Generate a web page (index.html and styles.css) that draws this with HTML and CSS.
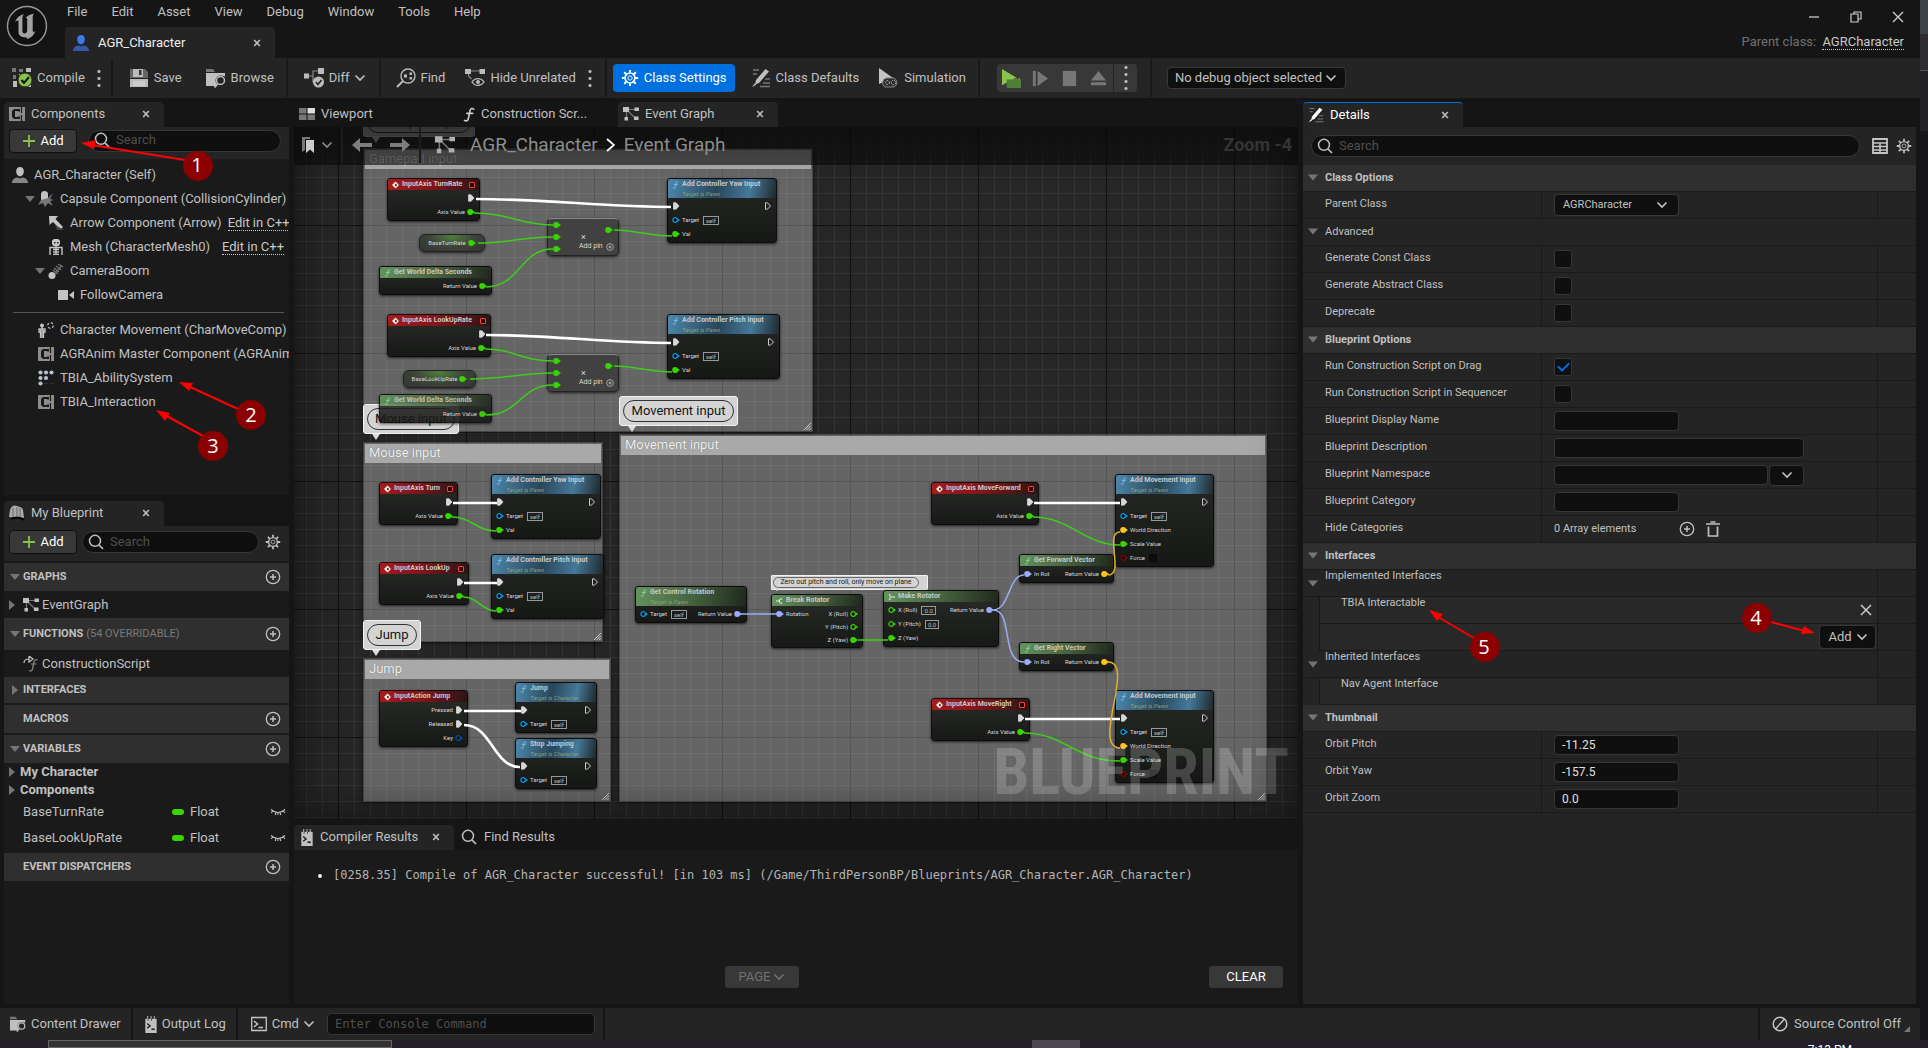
FILE: index.html
```html
<!DOCTYPE html>
<html lang="en">
<head>
<meta charset="utf-8">
<title>AGR_Character</title>
<link rel="stylesheet" href="styles.css">
</head>
<body>
<svg class="sprite" aria-hidden="true">
  <symbol id="i-exec" viewBox="0 0 8 8"><path d="M1.5 .8h2.6L7 4 4.100 7.200H1.500z" fill="currentColor" stroke="currentColor" stroke-width=".8" stroke-linejoin="round"/></symbol>
  <symbol id="i-exec-o" viewBox="0 0 8 8"><path d="M1.500.8h1.900L6.500 4 3.400 7.200H1.500z" fill="none" stroke="#ddd" stroke-width=".9" stroke-linejoin="round"/></symbol>
  <symbol id="i-pin" viewBox="0 0 8 8"><circle cx="3.200" cy="4" r="3" fill="currentColor"/><path d="M5.500 2.200 8 4 5.500 5.800z" fill="currentColor"/></symbol>
  <symbol id="i-pin-o" viewBox="0 0 8 8"><circle cx="3.200" cy="4" r="2.300" fill="#0b0b0b" stroke="currentColor" stroke-width="1.300"/><path d="M6 2.400 8 4 6 5.600z" fill="currentColor"/></symbol>
  <symbol id="i-event" viewBox="0 0 8 8"><path d="M4 0 8 4 4 8 0 4z" fill="#eee"/><path d="M3.500 2.500h1L6 4 4.500 5.500h-1z" fill="#7a1010"/></symbol>
  <symbol id="i-f" viewBox="0 0 8 10"><path d="M7.200 1.500C6.200.6 5 .9 4.700 2.400L3.500 8C3.200 9.300 2 9.600 1 8.900M2.500 4.200h4" fill="none" stroke="currentColor" stroke-width="1.100" stroke-linecap="round"/></symbol>
  <symbol id="i-chev" viewBox="0 0 10 8"><path d="M1 2l4 4 4-4" fill="none" stroke="currentColor" stroke-width="1.700" stroke-linecap="round"/></symbol>
  <symbol id="i-down" viewBox="0 0 10 6"><path d="M0 0h10L5 6z" fill="#757575"/></symbol>
  <symbol id="i-right" viewBox="0 0 6 10"><path d="M0 0v10l6-5z" fill="#757575"/></symbol>
  <symbol id="i-x" viewBox="0 0 8 8"><path d="M1.200 1l5.600 6M6.800 1 1.200 7" stroke="currentColor" stroke-width="1.700"/></symbol>
  <symbol id="i-plus" viewBox="0 0 14 14"><path d="M7 1v12M1 7h12" stroke="#8bc34a" stroke-width="1.800"/></symbol>
  <symbol id="i-addc" viewBox="0 0 16 16"><circle cx="8" cy="8" r="6.700" fill="none" stroke="currentColor" stroke-width="1.300"/><path d="M8 5v6M5 8h6" stroke="currentColor" stroke-width="1.500"/></symbol>
  <symbol id="i-search" viewBox="0 0 16 16"><circle cx="7" cy="6.800" r="5.500" fill="none" stroke="currentColor" stroke-width="1.500"/><path d="M11 11l4 4" stroke="currentColor" stroke-width="1.700"/></symbol>
  <symbol id="i-gear" viewBox="0 0 20 20"><circle cx="10" cy="10" r="5.500" fill="none" stroke="currentColor" stroke-width="1.800"/><circle cx="10" cy="10" r="2.400" fill="none" stroke="currentColor" stroke-width="1"/><g stroke="currentColor" stroke-width="2.200"><path d="M10 1v3M10 16v3M1 10h3M16 10h3M3.600 3.600l2.200 2.200M14.200 14.200l2.200 2.200M16.400 3.600l-2.200 2.200M5.800 14.200l-2.200 2.200"/></g></symbol>
  <symbol id="i-comp" viewBox="0 0 16 16"><path d="M0 1h16v14H0z" fill="#8d8d8d"/><path d="M11 5.500V3H5L3 5v6l2 2h6v-2.500H9v.5H6V5h3v.5z" fill="#1a1a1a"/><path d="M12.500 1v6M12.500 15V9" stroke="#1a1a1a" stroke-width="1.200"/></symbol>
  <symbol id="i-graph" viewBox="0 0 16 16"><path d="M5 3.500h7M4 4l8 8M3.500 5v8" stroke="#777" stroke-width="1.200"/><path d="M0 1h6v5H0zM11.500 1.500H16v3.500h-4.500zM11 10.500h4.500V14H11zM1.500 11h3.500v3.500H1.500z" fill="currentColor"/></symbol>
  <symbol id="i-user" viewBox="0 0 16 16"><path d="M8 0c2.500 0 3.800 1.700 3.800 4.300 0 2.700-1.600 5-3.800 5S4.200 7 4.200 4.300C4.200 1.700 5.500 0 8 0z" fill="currentColor"/><path d="M0 16c0-3.500 2.500-5 5.500-5.500L8 11.500l2.500-1C13.500 11 16 12.500 16 16z" fill="currentColor" opacity=".65"/></symbol>
  <symbol id="i-pen" viewBox="0 0 20 20"><path d="M2 2h6M2 6h4M12 15h7M9 18.500h10M14 11h5" stroke="#777" stroke-width="1.300"/><path d="M14.500 1 18 3.500 8 15l-4 1.500L5 12z" fill="currentColor"/><path d="M4 15l-3 4 4-2z" fill="currentColor"/></symbol>
  <symbol id="i-folder" viewBox="0 0 20 20"><path d="M0 1h7l2 3H0z" fill="#777"/><path d="M0 5h19v3.500a6 6 0 0 0-8 8L10 18H0z" fill="currentColor"/><circle cx="14.500" cy="12.500" r="5" fill="#242424"/><circle cx="14.500" cy="12.500" r="4" fill="none" stroke="currentColor" stroke-width="1.500"/><path d="M11.700 15.500 8.500 19.500" stroke="currentColor" stroke-width="1.800"/></symbol>
  <symbol id="i-log" viewBox="0 0 12 18"><path d="M0 3h12v15H0z" fill="currentColor"/><path d="M2.500 0v5M6 0v5M9.500 0v5" stroke="currentColor" stroke-width="1"/><path d="M3 3v2M6.500 3v2" stroke="#222" stroke-width=".8"/><path d="M2 8l3 2.500L2 13M6.500 14H10" fill="none" stroke="#1a1a1a" stroke-width="1.400"/></symbol>
  <symbol id="i-eye" viewBox="0 0 16 8"><path d="M1 1.500c4 4 10 4 14 0M2.800 3 1 5M6 4.500l-.8 2.500M10 4.500l.8 2.500M13.200 3 15 5M8 5v2" fill="none" stroke="currentColor" stroke-width="1.100"/></symbol>
  <symbol id="i-grip" viewBox="0 0 8 8"><path d="M0 8 8 0M3 8l5-5M6 8l2-2" stroke="#ddd" stroke-width="1"/></symbol>
</svg>

<div class="app">
  <header class="titlebar">
    <svg class="logo" viewBox="0 0 42 42"><circle cx="21" cy="21" r="19.500" fill="#101010" stroke="#9a9a9a" stroke-width="1.400"/><path d="M9 17c2-5 5.500-7 9-8-1.500 1.800-1.600 3-1.600 5v12c0 2 1.300 3 2.800 2.300 1.400-.6 2-1.300 2-3V14.500c0-1.200-.5-1.800-1.700-1.800 2.500-2.400 5-3.200 8.500-4.200-1 1.300-1.300 2.500-1.300 4.500v12.500c0 1.500 1 2 2.600.5-1.500 4.500-4 6.500-8 8-.3-1.300-.8-1.800-2-1.800-2.800 0-6.800-1-6.800-5V16.500c0-1.500-1.500-1.500-3.500.5z" fill="#a2a2a2"/></svg>
    <div class="title-main">
      <nav class="menu"><button>File</button><button>Edit</button><button>Asset</button><button>View</button><button>Debug</button><button>Window</button><button>Tools</button><button>Help</button></nav>
      <div class="doc-tab"><svg class="ic16 blue"><use href="#i-user"/></svg><span>AGR_Character</span><button class="close" aria-label="Close"><svg><use href="#i-x"/></svg></button></div>
    </div>
    <div class="title-right">
      <div class="win"><button aria-label="Minimize"><svg viewBox="0 0 12 12"><path d="M1 6h10" stroke="#ccc" stroke-width="1.300"/></svg></button><button aria-label="Restore"><svg viewBox="0 0 12 12"><path d="M1 3h7v8H1zM4 3V1h7v7H8" fill="none" stroke="#ccc" stroke-width="1.200"/></svg></button><button aria-label="Close window"><svg viewBox="0 0 12 12"><path d="M1 1l10 10M11 1 1 11" stroke="#ccc" stroke-width="1.400"/></svg></button></div>
      <div class="parent">Parent class: <a href="#">AGRCharacter</a></div>
    </div>
  </header>

  <div class="toolbar">
    <div class="group first">
      <button class="tool"><svg viewBox="0 0 20 20"><path d="M0 0h4v4H0zM7 1h4v3H7zM1 7h3v4H1z" fill="#777"/><path d="M14 0h5v4h-5zM7 6h4v3H7zM1 13h4v6H1zM16 15h3v4h-3z" fill="#bbb"/><circle cx="13" cy="12" r="7" fill="#8bc34a" stroke="#242424"/><path d="M9.500 12l2.500 3 5-6" fill="none" stroke="#111" stroke-width="2"/></svg>Compile</button><button class="dots" aria-label="Compile options"></button>
    </div>
    <div class="group g-file">
      <button class="tool save"><svg viewBox="0 0 20 20"><path d="M1 1h15l3 3v6H1z" fill="#666"/><path d="M4 1h10v8H4zM1 11h18v8H1z" fill="#bbb"/><path d="M10 2h2.500v5H10z" fill="#333"/><path d="M4 13v5h12v-5z" fill="#ccc"/></svg>Save</button>
      <button class="tool"><svg><use href="#i-folder"/></svg>Browse</button>
    </div>
    <div class="group g-diff">
      <button class="tool"><svg viewBox="0 0 20 20"><path d="M5 8h4V3h5M9 8v6h3" fill="none" stroke="#888" stroke-width="1.200"/><path d="M0 5.500h5v5H0zM14 0h6v6h-6z" fill="#bbb"/><circle cx="14.500" cy="14" r="5.500" fill="#bbb"/><path d="M12 14l2 2.500 3.500-4.500" fill="none" stroke="#222" stroke-width="1.600"/></svg>Diff<svg class="chev"><use href="#i-chev"/></svg></button>
    </div>
    <div class="group g-find">
      <button class="tool"><svg viewBox="0 0 20 20"><circle cx="12" cy="8" r="7" fill="none" stroke="#bbb" stroke-width="1.400"/><path d="M7 13l-6 6" stroke="#bbb" stroke-width="2"/><path d="M8 6.500h3v3H8zM13.500 4.500H16V7h-2.500zM13.500 9H16v2.500h-2.500zM11 8h1.500" fill="#bbb"/></svg>Find</button>
      <button class="tool"><svg viewBox="0 0 20 20"><path d="M5 3h11M3.500 4v4l3 3" fill="none" stroke="#888" stroke-width="1.200"/><path d="M0 1h6v5H0zM14.500 1H20v5h-5.500z" fill="#bbb"/><path d="M7 14c3-4.500 9-4.500 12 0-3 4.500-9 4.500-12 0z" fill="none" stroke="#bbb" stroke-width="1.300"/><circle cx="13" cy="14" r="2" fill="#bbb"/></svg>Hide Unrelated</button><button class="dots" aria-label="Hide options"></button>
    </div>
    <div class="group g-class">
      <button class="tool active"><svg><use href="#i-gear"/></svg>Class Settings</button>
      <button class="tool"><svg><use href="#i-pen"/></svg>Class Defaults</button>
      <button class="tool"><svg viewBox="0 0 20 20"><path d="M0 0l14 10L0 16z" fill="#c4c4c4"/><path d="M6 19a5 5 0 0 1 1-9h8a5 5 0 0 1 0 9z" fill="#2c2c2c" stroke="#888"/><circle cx="8.500" cy="14.500" r="2" fill="none" stroke="#bbb" stroke-dasharray="1.500 1"/><circle cx="14.500" cy="14.500" r="2.200" fill="none" stroke="#bbb" stroke-dasharray="1.500 1"/></svg>Simulation</button>
    </div>
    <div class="group">
      <div class="play">
        <button aria-label="Play"><svg viewBox="0 0 20 20"><path d="M0 0l15 9L0 17z" fill="#8bc34a"/><path d="M5 11h15v9H5z" fill="#4f7d38"/><path d="M11 10.500h9" stroke="#8bc34a" stroke-dasharray="2 1"/></svg></button>
        <button aria-label="Step"><svg viewBox="0 0 20 20"><path d="M3.500 2v16" stroke="#777" stroke-width="3"/><path d="M7 2l11 8-11 8z" fill="#777"/></svg></button>
        <button aria-label="Stop"><svg viewBox="0 0 20 20"><path d="M3 2h14v16H3z" fill="#777"/></svg></button>
        <button aria-label="Eject"><svg viewBox="0 0 20 20"><path d="M10 2l8 10H2zM2 14h16v3H2z" fill="#777"/></svg></button>
        <button class="dots" aria-label="Play options"></button>
      </div>
    </div>
    <div class="group last">
      <div class="select"><select class="debug" aria-label="Debug object"><option>No debug object selected</option></select><svg><use href="#i-chev"/></svg></div>
    </div>
  </div>

  <main class="work">
    <aside class="left">
      <div class="tabs"><div class="tab on"><svg class="ic16"><use href="#i-comp"/></svg><span>Components</span><button class="close" aria-label="Close"><svg><use href="#i-x"/></svg></button></div></div>
      <div class="find-row comps"><button class="add"><svg><use href="#i-plus"/></svg>Add</button><label class="search"><svg><use href="#i-search"/></svg><input placeholder="Search" aria-label="Search components"></label></div>
      <div class="tree">
        <ul>
          <li class="d0"><svg class="ic16"><use href="#i-user"/></svg><span>AGR_Character (Self)</span></li>
          <li class="d1"><svg class="tri"><use href="#i-down"/></svg><svg class="ic16" viewBox="0 0 16 16"><path d="M3 3c0-4 7-4 7 0v5c0 3-1 4-3.500 4S3 11 3 8z" fill="#c4c4c4"/><path d="M10 7l5-5-3 6 4 1-4 1 3 5-5-3-3 4-2-4-5 2 3-5z" fill="#777"/></svg><span>Capsule Component (CollisionCylinder)</span></li>
          <li class="d2"><svg class="ic16" viewBox="0 0 16 16"><path d="M1 1h9L7.500 4l7.500 8-2.500 2.500L5 7 1.500 10z" fill="#c4c4c4"/><path d="M7 10l9 5H9z" fill="#444"/></svg><span>Arrow Component (Arrow)</span><a href="#">Edit in C++</a></li>
          <li class="d2"><svg class="ic16" viewBox="0 0 16 16"><path d="M4 2c1-3 7-3 8 0v3l-1.500 2h-5L4 5z" fill="#c4c4c4"/><path d="M6 3h1.500v1.500H6zM9 3h1.500v1.500H9z" fill="#222"/><path d="M2 16V8.500h12V16M8 7v9M5 10.500h6M5 13h6M5 15.500h6" fill="none" stroke="#c4c4c4" stroke-width="1.400"/></svg><span class="mesh">Mesh (CharacterMesh0)</span><a href="#">Edit in C++</a></li>
          <li class="d1b"><svg class="tri"><use href="#i-down"/></svg><svg class="ic16" viewBox="0 0 16 16"><circle cx="4" cy="12.500" r="3.500" fill="#c4c4c4"/><path d="M5 7l5 4M6 5l5 4M8 3l5 4M10 1l5 3M7 11l7-9" stroke="#777" stroke-width="1.200"/></svg><span>CameraBoom</span></li>
          <li class="d3"><svg class="ic16" viewBox="0 0 16 16"><path d="M0 3h10v10H0zM11 8l5-4v8z" fill="#c4c4c4"/></svg><span>FollowCamera</span></li>
        </ul>
        <hr>
        <ul>
          <li class="d4"><svg class="ic16" viewBox="0 0 16 16"><circle cx="4" cy="3.500" r="2" fill="#c4c4c4"/><path d="M4 5v11M1 11l0-4h6v4M5.500 8v8M2.500 8v8" stroke="#c4c4c4" stroke-width="1.300" fill="none"/><circle cx="12.500" cy="3.500" r="2.800" fill="none" stroke="#c4c4c4" stroke-width="1.200" stroke-dasharray="2.400 2"/></svg><span>Character Movement (CharMoveComp)</span></li>
          <li class="d4"><svg class="ic16"><use href="#i-comp"/></svg><span>AGRAnim Master Component (AGRAnim</span></li>
          <li class="d4"><svg class="ic16" viewBox="0 0 16 16"><g fill="#b8c0cc"><circle cx="2.500" cy="2.500" r="2.100"/><circle cx="8" cy="2.500" r="2.100"/><circle cx="13.500" cy="2.500" r="2.100"/><circle cx="2.500" cy="8" r="2.100"/><circle cx="8" cy="8" r="2.100"/><circle cx="2.500" cy="13.500" r="2.100"/></g><path d="M6 13.500h4M12 13.500h4" stroke="#333"/></svg><span>TBIA_AbilitySystem</span></li>
          <li class="d4"><svg class="ic16"><use href="#i-comp"/></svg><span>TBIA_Interaction</span></li>
        </ul>
      </div>
      <div class="tabs second"><div class="tab on"><svg class="ic16" viewBox="0 0 16 16"><path d="M1 5c2-5 4-5 7-4s5 1 6 4l1 8-5-1-4 1-6-1z" fill="#aaa"/><path d="M4 3v9M8 2v9M11 3v9" stroke="#666"/><path d="M2 14c4-2 9-2 13 1" stroke="#000" stroke-width="2" fill="none"/></svg><span>My Blueprint</span><button class="close" aria-label="Close"><svg><use href="#i-x"/></svg></button></div></div>
      <div class="find-row bp"><button class="add"><svg><use href="#i-plus"/></svg>Add</button><label class="search"><svg><use href="#i-search"/></svg><input placeholder="Search" aria-label="Search blueprint"></label><button class="icon" aria-label="Settings"><svg><use href="#i-gear"/></svg></button></div>
      <div class="blueprint">
        <div class="sec"><svg class="tri"><use href="#i-down"/></svg><b>GRAPHS</b><button class="icon" aria-label="Add graph"><svg><use href="#i-addc"/></svg></button></div>
        <div class="item"><svg class="tri-r"><use href="#i-right"/></svg><svg class="ic16"><use href="#i-graph"/></svg><span>EventGraph</span></div>
        <div class="sec tall"><svg class="tri"><use href="#i-down"/></svg><b>FUNCTIONS</b><span class="dim">(54 OVERRIDABLE)</span><button class="icon" aria-label="Add function"><svg><use href="#i-addc"/></svg></button></div>
        <div class="item noarrow"><svg class="ic16" viewBox="0 0 16 16"><path d="M1 7c0-3 2-4 5-4M6 0l4 3-4 3z" stroke="#c4c4c4" fill="none" stroke-width="1.200"/><path d="M14.500 4c-2-1-3 0-3.500 2L9.500 13c-.5 2-2 2.500-3.500 1.500M8 8h5.500" fill="none" stroke="#888" stroke-width="1.200"/></svg><span>ConstructionScript</span></div>
        <div class="sec short gap"><svg class="tri-r"><use href="#i-right"/></svg><b>INTERFACES</b></div>
        <div class="sec gap"><i class="tri"></i><b>MACROS</b><button class="icon" aria-label="Add macro"><svg><use href="#i-addc"/></svg></button></div>
        <div class="sec"><svg class="tri"><use href="#i-down"/></svg><b>VARIABLES</b><button class="icon" aria-label="Add variable"><svg><use href="#i-addc"/></svg></button></div>
        <div class="cat"><svg class="tri-r"><use href="#i-right"/></svg><b>My Character</b></div>
        <div class="cat"><svg class="tri-r"><use href="#i-right"/></svg><b>Components</b></div>
        <div class="var"><span>BaseTurnRate</span><i></i><span>Float</span><svg><use href="#i-eye"/></svg></div>
        <div class="var gap"><span>BaseLookUpRate</span><i></i><span>Float</span><svg><use href="#i-eye"/></svg></div>
        <div class="sec"><i class="tri"></i><b>EVENT DISPATCHERS</b><button class="icon" aria-label="Add dispatcher"><svg><use href="#i-addc"/></svg></button></div>
      </div>
      <svg class="callouts" viewBox="4 98 289 380">
        <g stroke="#f00" stroke-width="2" fill="#f00"><path d="M185 160 92 145"/><path d="M81 143l15-3-2 9z" stroke="none"/><path d="M238 409l-50-23"/><path d="M179 382l14 1-4 8z" stroke="none"/><path d="M203 436l-38-21"/><path d="M156 410l14 3-5 8z" stroke="none"/></g>
        <g fill="#8b0000"><circle cx="198" cy="166" r="15"/><circle cx="251" cy="415" r="15"/><circle cx="213" cy="446" r="15"/></g>
        <g class="num"><text x="197" y="172">1</text><text x="251" y="422">2</text><text x="213" y="453">3</text></g>
      </svg>
    </aside>

    <section class="center">
      <div class="tabs graph-tabs">
        <div class="tab wide"><svg class="ic16" viewBox="0 0 16 16"><path d="M0 2h7.500v5.500H0zM0 8.500h7.500V14H0zM8.500 8.500H16V14H8.500z" fill="#777"/><path d="M8.500 2H16v5.500H8.500z" fill="#ddd"/></svg><span>Viewport</span></div>
        <div class="tab wide2"><svg class="f"><use href="#i-f"/></svg><span>Construction Scr...</span></div>
        <div class="tab on"><svg class="ic16"><use href="#i-graph"/></svg><span>Event Graph</span><button class="close" aria-label="Close"><svg><use href="#i-x"/></svg></button></div>
      </div>
      <div class="graph">
        <div class="bubble b-pad"><span>Gamepad input</span></div>
        <div class="comment c-pad"><h3>Gamepad input</h3><svg><use href="#i-grip"/></svg></div>
        <div class="comment c-mouse"><h3>Mouse input</h3><svg><use href="#i-grip"/></svg></div>
        <div class="comment c-jump"><h3>Jump</h3><svg><use href="#i-grip"/></svg></div>
        <div class="comment c-move"><h3>Movement input</h3><svg><use href="#i-grip"/></svg></div>
        <div class="bubble b-mouse"><span>Mouse input</span></div>
        <div class="bubble b-move"><span>Movement input</span></div>
        <div class="bubble b-jump"><span>Jump</span></div>
        <div class="bubble b-zero"><span>Zero out pitch and roll, only move on plane</span></div>

        <div class="node ev n1"><h4><svg><use href="#i-event"/></svg>InputAxis TurnRate<i></i></h4><div class="pins"><ul class="out"><li><svg><use href="#i-exec"/></svg></li><li class="g">Axis Value<svg><use href="#i-pin"/></svg></li></ul></div></div>
        <div class="node ev n6"><h4><svg><use href="#i-event"/></svg>InputAxis LookUpRate<i></i></h4><div class="pins"><ul class="out"><li><svg><use href="#i-exec"/></svg></li><li class="g">Axis Value<svg><use href="#i-pin"/></svg></li></ul></div></div>
        <div class="node ev n11"><h4><svg><use href="#i-event"/></svg>InputAxis Turn<i></i></h4><div class="pins"><ul class="out"><li><svg><use href="#i-exec"/></svg></li><li class="g">Axis Value<svg><use href="#i-pin"/></svg></li></ul></div></div>
        <div class="node ev n13"><h4><svg><use href="#i-event"/></svg>InputAxis LookUp<i></i></h4><div class="pins"><ul class="out"><li><svg><use href="#i-exec"/></svg></li><li class="g">Axis Value<svg><use href="#i-pin"/></svg></li></ul></div></div>
        <div class="node ev n21"><h4><svg><use href="#i-event"/></svg>InputAxis MoveForward<i></i></h4><div class="pins"><ul class="out"><li><svg><use href="#i-exec"/></svg></li><li class="g">Axis Value<svg><use href="#i-pin"/></svg></li></ul></div></div>
        <div class="node ev n25"><h4><svg><use href="#i-event"/></svg>InputAxis MoveRight<i></i></h4><div class="pins"><ul class="out"><li><svg><use href="#i-exec"/></svg></li><li class="g">Axis Value<svg><use href="#i-pin"/></svg></li></ul></div></div>
        <div class="node ev n15"><h4><svg><use href="#i-event"/></svg>InputAction Jump</h4><div class="pins"><ul class="out"><li>Pressed<svg><use href="#i-exec"/></svg></li><li>Released<svg><use href="#i-exec"/></svg></li><li class="k">Key<svg><use href="#i-pin-o"/></svg></li></ul></div></div>

        <div class="node fn n2"><h4><svg><use href="#i-f"/></svg>Add Controller Yaw Input</h4><p>Target is Pawn</p><div class="pins"><ul><li><svg><use href="#i-exec"/></svg></li><li class="t"><svg><use href="#i-pin-o"/></svg>Target<em>self</em></li><li class="g"><svg><use href="#i-pin"/></svg>Val</li></ul><ul class="out"><li><svg><use href="#i-exec-o"/></svg></li></ul></div></div>
        <div class="node fn n7"><h4><svg><use href="#i-f"/></svg>Add Controller Pitch Input</h4><p>Target is Pawn</p><div class="pins"><ul><li><svg><use href="#i-exec"/></svg></li><li class="t"><svg><use href="#i-pin-o"/></svg>Target<em>self</em></li><li class="g"><svg><use href="#i-pin"/></svg>Val</li></ul><ul class="out"><li><svg><use href="#i-exec-o"/></svg></li></ul></div></div>
        <div class="node fn n12"><h4><svg><use href="#i-f"/></svg>Add Controller Yaw Input</h4><p>Target is Pawn</p><div class="pins"><ul><li><svg><use href="#i-exec"/></svg></li><li class="t"><svg><use href="#i-pin-o"/></svg>Target<em>self</em></li><li class="g"><svg><use href="#i-pin"/></svg>Val</li></ul><ul class="out"><li><svg><use href="#i-exec-o"/></svg></li></ul></div></div>
        <div class="node fn n14"><h4><svg><use href="#i-f"/></svg>Add Controller Pitch Input</h4><p>Target is Pawn</p><div class="pins"><ul><li><svg><use href="#i-exec"/></svg></li><li class="t"><svg><use href="#i-pin-o"/></svg>Target<em>self</em></li><li class="g"><svg><use href="#i-pin"/></svg>Val</li></ul><ul class="out"><li><svg><use href="#i-exec-o"/></svg></li></ul></div></div>
        <div class="node fn n16"><h4><svg><use href="#i-f"/></svg>Jump</h4><p>Target is Character</p><div class="pins"><ul><li><svg><use href="#i-exec"/></svg></li><li class="t"><svg><use href="#i-pin-o"/></svg>Target<em>self</em></li></ul><ul class="out"><li><svg><use href="#i-exec-o"/></svg></li></ul></div></div>
        <div class="node fn n17"><h4><svg><use href="#i-f"/></svg>Stop Jumping</h4><p>Target is Character</p><div class="pins"><ul><li><svg><use href="#i-exec"/></svg></li><li class="t"><svg><use href="#i-pin-o"/></svg>Target<em>self</em></li></ul><ul class="out"><li><svg><use href="#i-exec-o"/></svg></li></ul></div></div>
        <div class="node fn n22"><h4><svg><use href="#i-f"/></svg>Add Movement Input</h4><p>Target is Pawn</p><div class="pins"><ul><li><svg><use href="#i-exec"/></svg></li><li class="t"><svg><use href="#i-pin-o"/></svg>Target<em>self</em></li><li class="y"><svg><use href="#i-pin"/></svg>World Direction</li><li class="g"><svg><use href="#i-pin"/></svg>Scale Value</li><li class="r"><svg><use href="#i-pin-o"/></svg>Force<s></s></li></ul><ul class="out"><li><svg><use href="#i-exec-o"/></svg></li></ul></div></div>
        <div class="node fn n26"><h4><svg><use href="#i-f"/></svg>Add Movement Input</h4><p>Target is Pawn</p><div class="pins"><ul><li><svg><use href="#i-exec"/></svg></li><li class="t"><svg><use href="#i-pin-o"/></svg>Target<em>self</em></li><li class="y"><svg><use href="#i-pin"/></svg>World Direction</li><li class="g"><svg><use href="#i-pin"/></svg>Scale Value</li><li class="r"><svg><use href="#i-pin-o"/></svg>Force<s></s></li></ul><ul class="out"><li><svg><use href="#i-exec-o"/></svg></li></ul></div></div>

        <div class="node mul n3"><ul><li class="g"><svg><use href="#i-pin"/></svg></li><li class="g"><svg><use href="#i-pin"/></svg></li><li class="g"><svg><use href="#i-pin"/></svg></li></ul><div class="mid"><b>×</b><span>Add pin <svg><use href="#i-addc"/></svg></span></div><svg class="res"><use href="#i-pin"/></svg></div>
        <div class="node mul n8"><ul><li class="g"><svg><use href="#i-pin"/></svg></li><li class="g"><svg><use href="#i-pin"/></svg></li><li class="g"><svg><use href="#i-pin"/></svg></li></ul><div class="mid"><b>×</b><span>Add pin <svg><use href="#i-addc"/></svg></span></div><svg class="res"><use href="#i-pin"/></svg></div>
        <div class="node get n4">BaseTurnRate<svg><use href="#i-pin"/></svg></div>
        <div class="node get n9">BaseLookUpRate<svg><use href="#i-pin"/></svg></div>

        <div class="node pure n5"><h4><svg><use href="#i-f"/></svg>Get World Delta Seconds</h4><div class="pins"><ul class="out"><li class="g">Return Value<svg><use href="#i-pin"/></svg></li></ul></div></div>
        <div class="node pure n10"><h4><svg><use href="#i-f"/></svg>Get World Delta Seconds</h4><div class="pins"><ul class="out"><li class="g">Return Value<svg><use href="#i-pin"/></svg></li></ul></div></div>
        <div class="node pure big n18"><h4><svg><use href="#i-f"/></svg>Get Control Rotation</h4><p>Target is Pawn</p><div class="pins"><ul><li class="t"><svg><use href="#i-pin-o"/></svg>Target<em>self</em></li></ul><ul class="out"><li class="v">Return Value<svg><use href="#i-pin"/></svg></li></ul></div></div>
        <div class="node pure n19"><h4><svg viewBox="0 0 8 8"><path d="M0 4h4M5 1.500h2M5 6.500h2M4 2v4" stroke="#eee" stroke-width="1.400" fill="none"/></svg>Break Rotator</h4><div class="pins"><ul><li class="v"><svg><use href="#i-pin"/></svg>Rotation</li></ul><ul class="out"><li class="g">X (Roll)<svg><use href="#i-pin-o"/></svg></li><li class="g">Y (Pitch)<svg><use href="#i-pin-o"/></svg></li><li class="g">Z (Yaw)<svg><use href="#i-pin"/></svg></li></ul></div></div>
        <div class="node pure n20"><h4><svg viewBox="0 0 8 8"><path d="M8 4H4M1 1.500h2M1 6.500h2M1.500 4H5" stroke="#eee" stroke-width="1.400" fill="none"/></svg>Make Rotator</h4><div class="pins"><ul><li class="g"><svg><use href="#i-pin-o"/></svg>X (Roll)<em>0.0</em></li><li class="g"><svg><use href="#i-pin-o"/></svg>Y (Pitch)<em>0.0</em></li><li class="g"><svg><use href="#i-pin"/></svg>Z (Yaw)</li></ul><ul class="out"><li class="v">Return Value<svg><use href="#i-pin"/></svg></li></ul></div></div>
        <div class="node pure n23"><h4><svg><use href="#i-f"/></svg>Get Forward Vector</h4><div class="pins"><ul><li class="v"><svg><use href="#i-pin"/></svg>In Rot</li></ul><ul class="out"><li class="y">Return Value<svg><use href="#i-pin"/></svg></li></ul></div></div>
        <div class="node pure n24"><h4><svg><use href="#i-f"/></svg>Get Right Vector</h4><div class="pins"><ul><li class="v"><svg><use href="#i-pin"/></svg>In Rot</li></ul><ul class="out"><li class="y">Return Value<svg><use href="#i-pin"/></svg></li></ul></div></div>

        <svg class="wires" viewBox="294 127 1004 692">
          <g stroke="#fff" stroke-width="2.600"><path d="M476 199C540 199 610 207 671 207"/><path d="M486 335C550 335 610 343 671 343"/><path d="M453 503h44M464 583h33M464 711h57M464 725C492 725 493 767 520 767M1034 503h86M1025 719h95"/></g>
          <g stroke="#3ecb1a" stroke-width="1.500"><path d="M474 213C510 213 520 225 553 225M478 243C510 243 520 237 553 237M486 287C520 287 520 249 553 249M614 230C635 230 650 236 672 236"/><path d="M485 349C515 349 520 361 553 361M470 379C505 379 520 373 553 373M486 415C520 415 520 385 553 385M614 366C635 366 650 372 672 372"/><path d="M452 517C472 517 476 531 496 531M463 597C478 597 482 611 496 611M858 640h30M1033 517C1070 517 1085 545 1120 545M1024 733C1065 733 1075 761 1120 761"/></g>
          <g stroke="#9aacf2" stroke-width="1.500"><path d="M741 614h36M993 610C1010 610 1008 575 1024 575M993 610C1014 610 1000 662 1024 662"/></g>
          <g stroke="#e0ae2c" stroke-width="1.500"><path d="M1108 575C1125 575 1104 532 1120 532M1108 662C1136 662 1091 748 1120 748"/></g>
        </svg>
        <div class="watermark">BLUEPRINT</div>
        <div class="crumbs">
          <svg class="mark" viewBox="0 0 12 16"><path d="M0 0h8v2H3v11L0 15z" fill="#777"/><path d="M4 3h8v13l-4-3.500L4 16z" fill="#ccc"/></svg><svg class="chev"><use href="#i-chev"/></svg><i class="bar"></i>
          <svg class="arrow" viewBox="0 0 20 14"><path d="M0 7l8-7v5h12v4H8v5z" fill="#7d7d7d"/></svg><svg class="arrow" viewBox="0 0 20 14"><path d="M20 7l-8-7v5H0v4h12v5z" fill="#7d7d7d"/></svg><i class="bar"></i>
          <svg class="big"><use href="#i-graph"/></svg><span>AGR_Character</span><svg class="gt" viewBox="0 0 9 14"><path d="M1 1l7 6-7 6" fill="none" stroke="#fff" stroke-width="1.800"/></svg><span>Event Graph</span><strong>Zoom -4</strong>
        </div>
      </div>
      <div class="tabs results-tabs">
        <div class="tab on"><svg class="log"><use href="#i-log"/></svg><span>Compiler Results</span><button class="close" aria-label="Close"><svg><use href="#i-x"/></svg></button></div>
        <div class="tab"><svg class="ic16"><use href="#i-search"/></svg><span>Find Results</span></div>
      </div>
      <div class="results">
        <ul><li>[0258.35] Compile of AGR_Character successful! [in 103 ms] (/Game/ThirdPersonBP/Blueprints/AGR_Character.AGR_Character)</li></ul>
        <div class="actions"><button class="page" disabled>PAGE<svg><use href="#i-chev"/></svg></button><button class="clear">CLEAR</button></div>
      </div>
    </section>

    <aside class="right">
      <div class="tabs"><div class="tab on focus"><svg class="ic16"><use href="#i-pen"/></svg><span>Details</span><button class="close" aria-label="Close"><svg><use href="#i-x"/></svg></button></div></div>
      <div class="details">
        <div class="d-search"><label class="search"><svg><use href="#i-search"/></svg><input placeholder="Search" aria-label="Search details"></label><button class="icon" aria-label="Property matrix"><svg viewBox="0 0 16 16"><path d="M1 1h14v14H1z" fill="none" stroke="#c4c4c4" stroke-width="1.800"/><path d="M1 5h14M1 8.500h14M1 12h14M8 5v10" stroke="#c4c4c4" stroke-width="1.600"/></svg></button><button class="icon" aria-label="Settings"><svg><use href="#i-gear"/></svg></button></div>
        <div class="head"><svg><use href="#i-down"/></svg>Class Options</div>
        <div class="row"><label for="pc">Parent Class</label><div><div class="select"><select id="pc" class="w125"><option>AGRCharacter</option></select><svg><use href="#i-chev"/></svg></div></div><i></i></div>
        <div class="adv"><svg><use href="#i-down"/></svg>Advanced</div>
        <div class="row"><label for="c1">Generate Const Class</label><div><input type="checkbox" id="c1"></div><i></i></div>
        <div class="row"><label for="c2">Generate Abstract Class</label><div><input type="checkbox" id="c2"></div><i></i></div>
        <div class="row"><label for="c3">Deprecate</label><div><input type="checkbox" id="c3"></div><i></i></div>
        <div class="head"><svg><use href="#i-down"/></svg>Blueprint Options</div>
        <div class="row"><label for="c4">Run Construction Script on Drag</label><div><input type="checkbox" id="c4" checked></div><i></i></div>
        <div class="row"><label for="c5">Run Construction Script in Sequencer</label><div><input type="checkbox" id="c5"></div><i></i></div>
        <div class="row"><label for="t1">Blueprint Display Name</label><div><input class="w125" id="t1"></div><i></i></div>
        <div class="row"><label for="t2">Blueprint Description</label><div><input class="w250" id="t2"></div><i></i></div>
        <div class="row"><label for="t3">Blueprint Namespace</label><div><input class="w214" id="t3"><button class="combo" aria-label="Choose namespace"><svg><use href="#i-chev"/></svg></button></div><i></i></div>
        <div class="row"><label for="t4">Blueprint Category</label><div><input class="w125" id="t4"></div><i></i></div>
        <div class="row"><span class="lab">Hide Categories</span><div><span class="arr">0 Array elements</span><button class="icon" aria-label="Add element"><svg><use href="#i-addc"/></svg></button><button class="icon" aria-label="Remove all"><svg viewBox="0 0 16 16"><path d="M1 3h14M5.500 1h5" stroke="currentColor" stroke-width="1.600"/><path d="M3.500 5.500V15h9V5.500" fill="none" stroke="currentColor" stroke-width="1.700"/></svg></button></div><i></i></div>
        <div class="head"><svg><use href="#i-down"/></svg>Interfaces</div>
        <div class="adv top"><svg><use href="#i-down"/></svg>Implemented Interfaces<i></i></div>
        <div class="sub"><span>TBIA Interactable</span><button class="rm" aria-label="Remove interface"><svg viewBox="0 0 12 12"><path d="M1 1l10 10M11 1 1 11" stroke="#ccc" stroke-width="1.500"/></svg></button><i></i></div>
        <div class="sub"><span></span><button class="add-if">Add<svg><use href="#i-chev"/></svg></button><i></i></div>
        <div class="adv top"><svg><use href="#i-down"/></svg>Inherited Interfaces<i></i></div>
        <div class="sub"><span>Nav Agent Interface</span><b></b><i></i></div>
        <div class="head"><svg><use href="#i-down"/></svg>Thumbnail</div>
        <div class="row"><label for="o1">Orbit Pitch</label><div><input class="w125" id="o1" value="-11.25"></div><i></i></div>
        <div class="row"><label for="o2">Orbit Yaw</label><div><input class="w125" id="o2" value="-157.5"></div><i></i></div>
        <div class="row"><label for="o3">Orbit Zoom</label><div><input class="w125" id="o3" value="0.0"></div><i></i></div>
      </div>
      <svg class="callouts r" viewBox="1303 98 613 600">
        <g stroke="#f00" stroke-width="2" fill="#f00"><path d="M1771 622l34 9"/><path d="M1815 633l-14 1 3-8z" stroke="none"/><path d="M1474 638l-36-21"/><path d="M1429 610l14 4-6 7z" stroke="none"/></g>
        <g fill="#8b0000"><circle cx="1757" cy="618" r="15"/><circle cx="1485" cy="647" r="15"/></g>
        <g class="num"><text x="1756" y="625">4</text><text x="1484" y="654">5</text></g>
      </svg>
    </aside>
  </main>

  <footer class="status">
    <button class="cell c1"><svg><use href="#i-folder"/></svg>Content Drawer</button>
    <button class="cell c2"><svg class="log"><use href="#i-log"/></svg>Output Log</button>
    <div class="cell c3"><button class="cmd"><svg viewBox="0 0 16 16"><path d="M.7 1.500h14.600v13H.7z" fill="none" stroke="#c4c4c4" stroke-width="1.300"/><path d="M3 5l3.500 3L3 11M7.500 11.500H12" fill="none" stroke="#c4c4c4" stroke-width="1.500"/></svg>Cmd<svg class="chev"><use href="#i-chev"/></svg></button><input placeholder="Enter Console Command" aria-label="Console command"></div>
    <button class="cell c4"><svg viewBox="0 0 16 16"><circle cx="8" cy="8" r="6.800" fill="none" stroke="#c4c4c4" stroke-width="1.500"/><path d="M12.500 3 3.500 13" stroke="#c4c4c4" stroke-width="1.500"/></svg>Source Control Off<svg class="corner" viewBox="0 0 8 8"><path d="M8 0v8H0z" fill="#777"/></svg></button>
  </footer>
</div>
<div class="desktop"><div class="thumb"></div><div class="task"></div><div class="clock">7:13 PM</div></div>
</body>
</html>
```
FILE: styles.css
```css
* { box-sizing: border-box; }
body { margin: 0; height: 100vh; overflow: hidden; display: flex; flex-direction: column; font: 13px/16px Roboto, "Liberation Sans", sans-serif; color: #c0c0c0; background: linear-gradient(#3d4248 34px, #2c2c31 34px, #2c2c31 70px, #55565a 70px, #55565a 71px, #222226 71px, #222226 131px, #17171a 131px); }
ul { list-style: none; margin: 0; padding: 0; }
h3, h4, p { margin: 0; }
button, input, select { font: inherit; color: inherit; }
button { background: none; border: 0; padding: 0; display: inline-flex; align-items: center; white-space: nowrap; }
a { color: #c8c8c8; text-decoration: none; border-bottom: 1px dotted #c8c8c8; }
svg { display: block; flex: none; }
i { font-style: normal; }
.sprite { position: absolute; width: 0; height: 0; }
.ic16 { width: 16px; height: 16px; }
.chev { width: 10px; height: 8px; }
.tri { width: 10px; height: 6px; }
.tri-r { width: 6px; height: 10px; }
.blue { color: #3b78f0; }

.app { flex: 1; min-height: 0; margin-right: 8px; background: #151515; display: flex; flex-direction: column; }

/* Title bar */
.titlebar { display: flex; height: 58px; flex: none; }
.logo { width: 42px; height: 42px; margin: 5px 17px 0 6px; }
.title-main { flex: 1; display: flex; flex-direction: column; }
.menu { display: flex; gap: 24px; height: 27px; padding: 0 0 3px 2px; }
.doc-tab { display: flex; align-items: center; width: 210px; height: 31px; padding: 0 14px 0 8px; background: #242424; border-radius: 4px 4px 0 0; color: #eee; gap: 9px; }
.close { margin-left: auto; color: #bbb; }
.close svg { width: 8px; height: 8px; }
.title-right { display: flex; flex-direction: column; align-items: flex-end; padding-right: 16px; }
.win { display: flex; gap: 30px; height: 34px; }
.win svg { width: 12px; height: 12px; }
.parent { color: #707070; }
.parent a { margin-left: 3px; }

/* Toolbar */
.toolbar { display: flex; height: 40px; flex: none; background: #242424; }
.group { display: flex; align-items: center; padding: 0 8px 0 6px; border-right: 2px solid #181818; margin: 1px 0; }
.group.first { padding: 0 8px 0 2px; }
.group.last { border: 0; padding-left: 15px; }
.g-file { gap: 4px; padding-right: 2px; }
.g-diff { padding-right: 4px; }
.g-find { padding-left: 5px; padding-right: 11px; }
.g-class { padding-right: 2px; }
.tool { height: 28px; padding: 0 10px; gap: 5px; border-radius: 4px; }
.tool svg { width: 20px; height: 20px; }
.tool .chev { width: 10px; height: 8px; }
.tool.active { background: #0070e0; color: #fff; padding: 0 8px; margin-right: 6px; }
.tool.active svg { width: 18px; height: 18px; }
.dots { width: 8px; height: 20px; background: radial-gradient(circle, #c0c0c0 1px, transparent 2px) 0 0 / 8px 7px; }
.play { display: flex; align-items: center; height: 28px; margin: 0 5px 0 11px; background: #383838; border-radius: 4px; }
.play button { width: 29px; height: 28px; justify-content: center; }
.play svg { width: 19px; height: 19px; }
.play .dots { width: 24px; height: 28px; background-size: 24px 7px; border-left: 1px solid #242424; }
.select { position: relative; display: inline-flex; align-items: center; }
.select select { appearance: none; height: 22px; background: #0f0f0f; border: 1px solid #383838; border-radius: 4px; padding: 0 8px; }
.select svg { position: absolute; right: 12px; width: 10px; height: 8px; pointer-events: none; }
.select .debug { width: 179px; padding: 0 7px; }
.select .debug + svg { right: 10px; }

/* Panels */
.work { flex: 1; min-height: 0; display: grid; grid-template-columns: 285px minmax(0, 1fr) 613px; column-gap: 5px; padding: 4px; }
.left, .center, .right { display: flex; flex-direction: column; min-width: 0; min-height: 0; position: relative; }
.tabs { display: flex; height: 25px; flex: none; }
.tab { display: flex; align-items: center; gap: 6px; padding: 0 14px 1px 5px; white-space: nowrap; }
.tab.on { width: 160px; background: #242424; border-radius: 4px 4px 0 0; }
.focus { color: #fff; border-top: 1px solid #0070e0; }
.find-row { display: flex; align-items: center; flex: none; background: #242424; padding: 0 8px 0 5px; }
.comps { height: 32px; padding-bottom: 5px; gap: 11px; }
.bp { height: 35px; padding-bottom: 3px; gap: 5px; }
.add { width: 68px; height: 24px; justify-content: center; gap: 4px; background: #383838; border: 1px solid #0f0f0f; border-radius: 4px; color: #fff; }
.add svg { width: 14px; height: 14px; }
.search { display: flex; align-items: center; flex: 1; min-width: 0; height: 22px; background: #0f0f0f; border: 1px solid #363636; border-radius: 11px; padding: 0 5px 1px; gap: 6px; }
.search svg { width: 16px; height: 16px; }
.search input { flex: 1; min-width: 0; background: none; border: 0; padding: 0; outline: 0; }
::placeholder { color: #4e4e4e; opacity: 1; }
.icon svg { width: 16px; height: 16px; }
.bp .icon { margin-left: 1px; }
.tree { height: 336px; flex: none; background: #1a1a1a; padding: 4px 0 0 8px; overflow: hidden; }
.tree li { display: flex; align-items: center; height: 24px; gap: 6px; white-space: nowrap; }
.tree span, .tree a { flex: none; }
.tree a { line-height: 15px; }
.tree .mesh { margin-right: 6px; }
.tree hr { border: 0; border-top: 1px solid #555; margin: 5px 5px 5px 1px; }
.tree .d1 { padding-left: 13px; gap: 3px; }
.tree .d1 span { margin-left: 3px; }
.tree .d1b { padding-left: 23px; gap: 3px; }
.tree .d1b span { margin-left: 3px; }
.tree .d2 { padding-left: 36px; }
.tree .d3 { padding-left: 46px; }
.tree .d4 { padding-left: 26px; }
.second { margin-top: 6px; }
.blueprint { flex: 1; background: #1a1a1a; padding-top: 2px; min-height: 0; }
.sec { display: flex; align-items: center; height: 28px; padding: 0 8px 0 6px; gap: 3px; background: #2f2f2f; font-size: 11px; }
.sec.tall { height: 32px; }
.sec.short { height: 26px; }
.sec .tri-r { margin: 0 2px; }
.gap { margin-bottom: 2px; }
.sec .icon { margin-left: auto; }
.dim { color: #7a7a7a; }
.item { display: flex; align-items: center; height: 27px; padding-left: 5px; gap: 3px; }
.item .tri-r { margin-right: 5px; }
.item.noarrow { padding-left: 19px; }
.cat { display: flex; align-items: center; height: 18px; padding-left: 5px; gap: 5px; }
.var { display: grid; grid-template-columns: 149px 18px 1fr 16px; align-items: center; height: 26px; padding: 0 3px 0 19px; }
.var i { width: 12px; height: 6px; border-radius: 3px; background: #38d500; }
.var svg { width: 16px; height: 8px; }
.callouts { position: absolute; left: 0; top: -4px; width: 289px; height: 380px; pointer-events: none; }
.callouts.r { width: 613px; height: 600px; }
.num text { font: 20px "Open Sans", sans-serif; fill: #fff; text-anchor: middle; }

/* Graph */
.wide { width: 164px; }
.wide2 { width: 160px; }
.tab .f { width: 12px; height: 15px; color: #ccc; }
.graph { flex: 1; min-height: 0; position: relative; overflow: hidden; background-color: #262626; background-image: linear-gradient(90deg, #111 1px, transparent 1px), linear-gradient(#111 1px, transparent 1px), linear-gradient(90deg, #343434 1px, transparent 1px), linear-gradient(#343434 1px, transparent 1px); background-size: 128px 128px, 128px 128px, 16px 16px, 16px 16px; background-position: 44px 98px, 44px 98px, 12px 2px, 12px 2px; }
.graph::after { content: ""; position: absolute; inset: 0; box-shadow: inset 0 0 40px 5px rgba(0, 0, 0, .5); pointer-events: none; }
.comment { position: absolute; background: rgba(255, 255, 255, .29); border: 1px solid rgba(40, 40, 40, .5); padding: 1px; box-shadow: 0 1px 4px rgba(0, 0, 0, .6); }
.comment h3 { height: 19px; background: #a9a9a9; color: #f0f0f0; font-size: 13px; font-weight: 400; line-height: 18px; padding-left: 4px; text-shadow: 0 0 1px #666; }
.comment svg { position: absolute; right: 1px; bottom: 1px; width: 7px; height: 7px; }
.c-pad { left: 69px; top: 21px; width: 450px; height: 284px; }
.c-mouse { left: 69px; top: 315px; width: 240px; height: 200px; }
.c-jump { left: 69px; top: 531px; width: 248px; height: 144px; }
.c-move { left: 325px; top: 307px; width: 648px; height: 368px; }
.bubble { position: absolute; height: 30px; padding: 3px; background: #d4d4d4; border: 1px solid #f2f2f2; border-radius: 3px; color: #151515; font-size: 13px; }
.bubble span { display: block; height: 22px; border: 1px solid #333; border-radius: 11px; line-height: 19px; white-space: nowrap; text-align: center; }
.bubble::after { content: ""; position: absolute; left: 8px; top: 29px; border: 4px solid transparent; border-top: 6px solid #ddd; }
.b-pad { left: 69px; top: -20px; width: 112px; opacity: .8; }
.b-mouse { left: 69px; top: 277px; width: 96px; }
.b-move { left: 325px; top: 269px; width: 119px; }
.b-jump { left: 69px; top: 493px; width: 58px; }
.b-zero { left: 477px; top: 448px; width: 157px; height: 15px; padding: 1px; padding-right: 8px; font-size: 7px; border-radius: 1px; }
.b-zero span { height: 11px; line-height: 9px; border-color: #666; }
.b-zero::after { left: 3px; top: 13px; border-width: 2px; }
.node { position: absolute; background: linear-gradient(rgba(40, 42, 40, .97), rgba(20, 22, 20, .97)); border: 1px solid #0c0c0c; border-radius: 3px; box-shadow: 0 1px 3px rgba(0, 0, 0, .7); font-size: 6px; color: #d8d8d8; overflow: hidden; }
.node h4 { display: flex; align-items: center; height: 11px; padding: 0 4px; gap: 3px; font-size: 7px; font-weight: 700; color: #c9c9c9; white-space: nowrap; line-height: 11px; }
.node h4 svg { width: 7px; height: 8px; }
.node h4 i { width: 6px; height: 6px; margin-left: auto; background: #1a0000; border: 1px solid #ff3b3b; border-radius: 1px; }
.node p { height: 8px; padding-left: 14px; font-size: 6px; line-height: 7px; font-style: italic; color: #8a9f7a; }
.ev h4 { background: linear-gradient(100deg, #a81a1d, #7e1618 50%, #2b1515); }
.fn { background: linear-gradient(100deg, #4d88ac, #28465a 45%, #46799a 75%, #1f282c) 0 0 / 100% 19px no-repeat, linear-gradient(#262826, #161816); }
.fn h4 svg { color: #7cc4f0; }
.pure h4 { background: linear-gradient(100deg, #64935f, #47643f 50%, #20281e); }
.pure.big { background: linear-gradient(100deg, #64935f, #47643f 50%, #20281e) 0 0 / 100% 19px no-repeat, linear-gradient(#262826, #161816); }
.pure.big h4 { background: none; }
.pure h4 svg { color: #8fe08f; }
.pins { display: flex; justify-content: space-between; padding: 1px 4px; }
.pins li { display: flex; align-items: center; height: 14px; gap: 2px; white-space: nowrap; line-height: 8px; }
.pins svg { width: 8px; height: 8px; }
.pins .out { margin-left: auto; }
.pins em { font-style: normal; border: 1px solid #999; color: #bbb; padding: 0 2px; height: 9px; line-height: 7px; margin-left: 2px; }
.pins s { width: 8px; height: 8px; background: #0b0b0b; margin-left: 2px; }
.out li { justify-content: flex-end; }
.g svg, .res { color: #38d500; }
.t svg { color: #0a9be8; }
.k svg { color: #0d4ca8; }
.y svg { color: #ffc423; }
.v svg { color: #9aacf8; }
.r svg { color: #8a0000; }
.mul { display: flex; justify-content: space-between; background: rgba(62, 62, 62, .92); border-color: #222; border-radius: 5px; border-top-color: #888; width: 72px; height: 38px; padding: 0 5px; }
.mul li { height: 12px; padding-top: 2px; }
.mul li svg, .res { width: 8px; height: 8px; }
.mul .res { margin-top: 7px; }
.mul .mid { display: flex; flex-direction: column; flex: 1; padding-top: 13px; margin-left: 18px; margin-right: -9px; }
.mid b { font-size: 9px; line-height: 10px; font-weight: 400; padding-left: 2px; }
.mid span { display: flex; align-items: center; gap: 3px; font-size: 7px; line-height: 9px; white-space: nowrap; }
.mid svg { width: 8px; height: 8px; }
.get { display: flex; align-items: center; justify-content: center; gap: 2px; height: 18px; border-radius: 6px; border-color: #222; background: radial-gradient(ellipse at 50% 10%, #4f7d3d, #3d443a 50%, #333); }
.get svg { width: 8px; height: 8px; color: #38d500; }
.n1 { left: 93px; top: 51px; width: 93px; }
.n2 { left: 373px; top: 51px; width: 110px; }
.n3 { left: 253px; top: 91px; }
.n4 { left: 125px; top: 107px; width: 66px; }
.n5 { left: 85px; top: 139px; width: 113px; }
.n6 { left: 93px; top: 187px; width: 104px; }
.n7 { left: 373px; top: 187px; width: 113px; }
.n8 { left: 253px; top: 227px; }
.n9 { left: 109px; top: 243px; width: 73px; }
.n10 { left: 85px; top: 267px; width: 113px; opacity: .9; }
.n11 { left: 85px; top: 355px; width: 79px; }
.n12 { left: 197px; top: 347px; width: 110px; }
.n13 { left: 85px; top: 435px; width: 90px; }
.n14 { left: 197px; top: 427px; width: 113px; }
.n15 { left: 85px; top: 563px; width: 89px; }
.n16 { left: 221px; top: 555px; width: 82px; }
.n17 { left: 221px; top: 611px; width: 82px; }
.n18 { left: 341px; top: 459px; width: 112px; }
.n19 { left: 477px; top: 467px; width: 92px; }
.n19 li { height: 13px; }
.n20 { left: 589px; top: 463px; width: 116px; }
.n21 { left: 637px; top: 355px; width: 108px; }
.n22 { left: 821px; top: 347px; width: 99px; }
.n23 { left: 725px; top: 427px; width: 95px; }
.n24 { left: 725px; top: 515px; width: 95px; }
.n25 { left: 637px; top: 571px; width: 99px; }
.n26 { left: 821px; top: 563px; width: 99px; }
.wires { position: absolute; left: 0; top: 0; width: 1004px; height: 692px; fill: none; }
.watermark { position: absolute; right: 9px; bottom: 14px; font: 700 64px/64px "Roboto Condensed", Roboto, sans-serif; color: rgba(255, 255, 255, .2); }
.crumbs { position: absolute; left: 0; right: 0; top: 0; height: 38px; display: flex; align-items: center; background: rgba(8, 8, 8, .62); font-size: 19px; color: #8d8d8d; padding: 0 6px 2px 8px; z-index: 1; }
.mark { width: 12px; height: 16px; margin-right: 8px; }
.crumbs .bar { width: 2px; height: 36px; background: #1c1c1c; margin: 0 9px; }
.arrow { width: 20px; height: 14px; margin-right: 18px; }
.arrow + .arrow { margin-right: 0; }
.crumbs .big { width: 22px; height: 20px; margin: 0 14px 0 4px; color: #b0b0b0; }
.crumbs .gt { width: 9px; height: 14px; margin: 0 9px 0 8px; }
.crumbs strong { margin-left: auto; color: #343434; font-size: 18px; }

/* Results */
.results-tabs { margin-top: 6px; }
.results-tabs .tab { padding-left: 7px; gap: 7px; }
.log { width: 12px; height: 17px; }
.results { height: 154px; flex: none; background: #1a1a1a; display: flex; flex-direction: column; justify-content: space-between; padding: 17px 15px 16px 24px; }
.results li { display: flex; gap: 11px; font: 12px/16px "DejaVu Sans Mono", monospace; color: #b4b4b4; }
.results li::before { content: ""; width: 4px; height: 4px; margin-top: 7px; border-radius: 2px; background: #eee; }
.actions { display: grid; grid-template-columns: 1fr 74px 1fr; padding-left: 2px; }
.page, .clear { width: 74px; height: 22px; justify-content: center; gap: 4px; background: #383838; border-radius: 3px; color: #fff; }
.page { color: #707070; grid-column: 2; margin-left: -40px; }
.clear { justify-self: end; }
.page svg { width: 10px; height: 8px; }

/* Details */
.details { flex: 1; min-height: 0; background: #242424; font-size: 11px; line-height: 14px; }
.d-search { display: flex; align-items: center; height: 38px; padding: 0 4px 0 8px; gap: 8px; font-size: 13px; }
.d-search .search { margin-right: 4px; }
.head, .adv { display: flex; align-items: center; gap: 7px; height: 27px; padding: 0 0 1px 5px; border-bottom: 1px solid #1a1a1a; }
.head { background: #2f2f2f; font-weight: 700; }
.head svg, .adv svg { width: 10px; height: 7px; }
.row { display: grid; grid-template-columns: 238px 1fr 39px; height: 27px; border-bottom: 1px solid #1a1a1a; }
.row label, .row .lab { padding: 5px 0 0 22px; }
.row > div { display: flex; align-items: center; border-left: 1px solid #1a1a1a; padding-left: 12px; gap: 1px; }
.row > i, .adv > i, .sub > i { border-left: 1px solid #1a1a1a; }
.adv > i { margin-left: auto; width: 39px; align-self: stretch; }
.adv.top { align-items: flex-start; line-height: 12px; }
.adv.top svg { margin-top: 10px; }
.row input { height: 20px; background: #0f0f0f; border: 1px solid #363636; border-radius: 4px; padding: 0 7px; color: #e0e0e0; margin: 0; font-size: 12px; }
.row input[type=checkbox] { appearance: none; width: 18px; height: 18px; padding: 0; border-radius: 3px; display: grid; place-items: center; }
.row input[type=checkbox]:checked::after { content: ""; width: 9px; height: 5px; border: solid #0070e0; border-width: 0 0 2px 2px; transform: rotate(-45deg); margin-bottom: 3px; }
.w125 { width: 125px; }
.w250 { width: 250px; }
.w214 { width: 214px; }
.combo { width: 35px; height: 21px; justify-content: center; background: #0f0f0f; border: 1px solid #363636; border-radius: 4px; }
.combo svg, .add-if svg { width: 10px; height: 8px; }
.arr { width: 124px; }
.row .icon { margin-right: 9px; }
.sub { display: grid; grid-template-columns: 1fr auto 39px; height: 27px; margin-left: 16px; border-left: 1px solid #1a1a1a; border-bottom: 1px solid #1a1a1a; background: #282828; }
.sub span { padding-left: 21px; line-height: 12px; }
.sub > i { background: #242424; }
.rm { padding: 0 5px; }
.rm svg { width: 12px; height: 12px; }
.add-if { width: 57px; margin: 1px; justify-content: center; gap: 5px; background: #0f0f0f; border: 1px solid #363636; border-radius: 4px; font-size: 13px; }

/* Status bar */
.status { display: flex; height: 32px; flex: none; background: #242424; }
.cell { display: flex; align-items: center; height: 32px; gap: 5px; border-right: 2px solid #151515; }
.cell svg { width: 16px; height: 16px; }
.cell .log { width: 12px; height: 17px; }
.cell .chev { width: 10px; height: 8px; }
.c1 { padding: 0 10px; }
.c2 { padding: 0 10px 0 12px; }
.c3 { padding: 0 8px 0 13px; gap: 13px; }
.cmd { gap: 5px; }
.c3 input { width: 268px; height: 22px; background: #0f0f0f; border: 1px solid #363636; border-radius: 4px; padding: 0 7px; font: 12px "DejaVu Sans Mono", monospace; }
.c4 { margin-left: auto; border-right: 0; border-left: 2px solid #151515; padding: 0 10px 0 12px; gap: 6px; }
.c4 .corner { width: 6px; height: 6px; align-self: flex-end; margin: 0 0 8px -6px; }
.c4 .corner { margin-left: -3px; }

.desktop { height: 8px; flex: none; display: flex; overflow: hidden; background: #241f28; padding: 0 76px 0 48px; }
.thumb { width: 344px; height: 8px; background: #333; border: 1px solid #666; }
.task { width: 48px; margin-left: 640px; background: #4b494f; }
.clock { margin-left: auto; color: #fff; font-size: 12px; line-height: 16px; padding-top: 2px; }
```
